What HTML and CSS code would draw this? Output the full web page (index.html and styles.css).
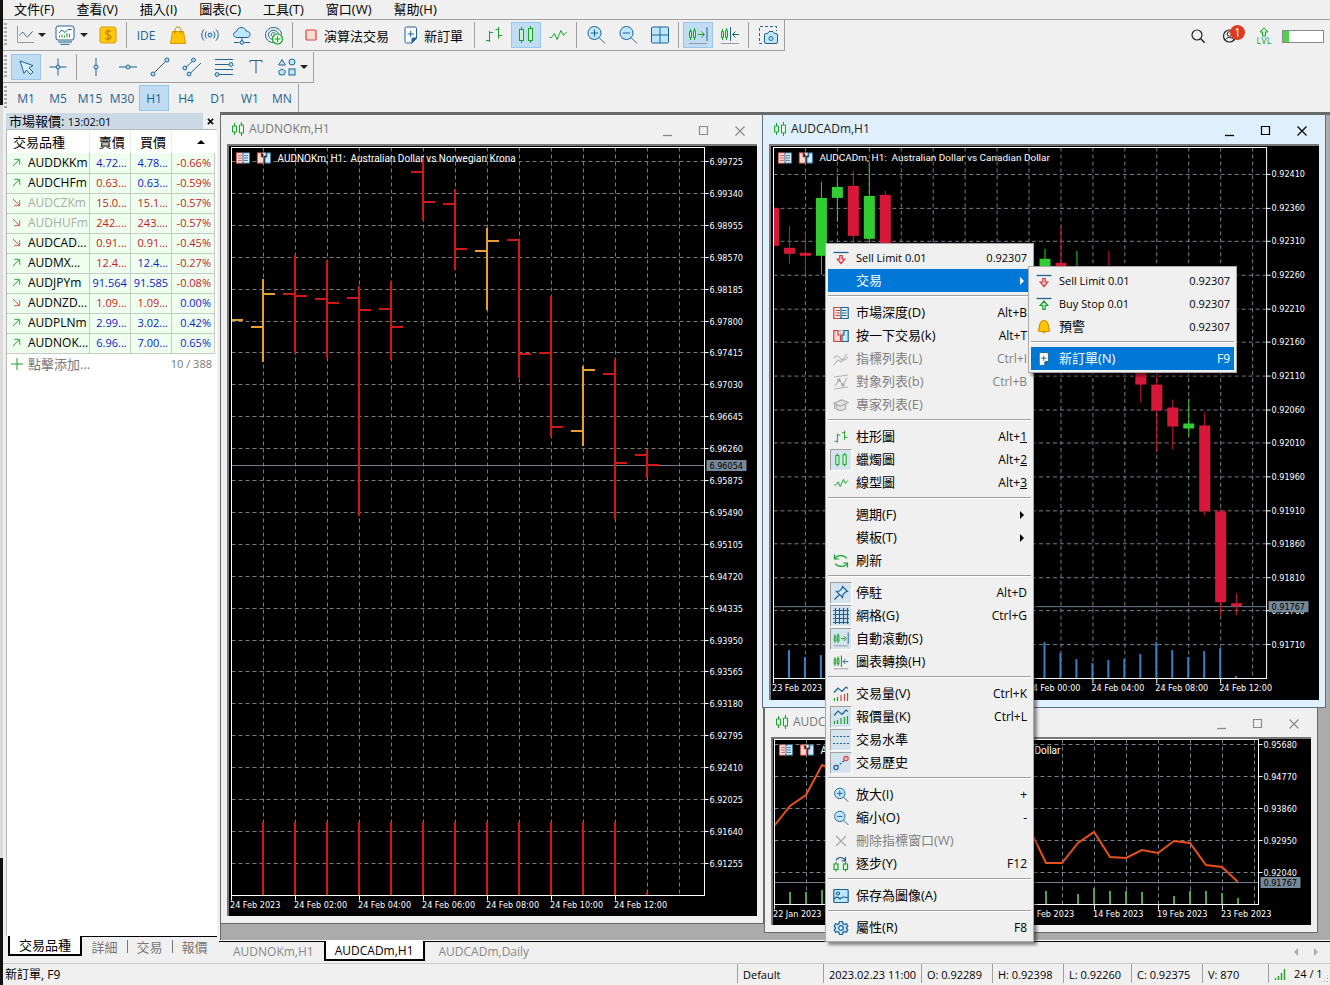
FILE: index.html
```html
<!DOCTYPE html>
<html lang="zh-Hant">
<head>
<meta charset="utf-8">
<title>AUDCADm,H1</title>
<link rel="stylesheet" href="styles.css">
</head>
<body>
<svg class="defs" aria-hidden="true">
  <symbol id="i-linechart" viewBox="0 0 20 20"><path d="M2.500 1v16.500H19" stroke="#999"/><path d="M4.500 10.500c2-3 3.500-4 5-1.500s3 3.500 4 2l4-4.500" class="b"/></symbol>
  <symbol id="i-template" viewBox="0 0 20 20"><rect x="1" y="1" width="18" height="14" rx="2" class="b" fill="#fff"/><path d="M3 17h14M5.500 19.300h9" class="b"/><path d="M4 8l3-3 3 2.500L13 4.500h3.500" class="b"/><path d="M4.500 12.500v-2M7 12.500v-3M9.500 12.500v-2M12 12.500V8M14.500 12.500V9" class="g"/></symbol>
  <symbol id="i-dollar" viewBox="0 0 20 20"><rect x="2" y="2" width="16" height="16" rx="2" fill="#ffca08" stroke="#d99a00"/><path d="M13 6.500c-2-1.500-5.500-1-5.500 1.300 0 2.800 5.500 1.400 5.500 4.400 0 2.300-4 2.500-6 .8M10.200 4v12" stroke="#c88400" stroke-width="1.300"/></symbol>
  <symbol id="i-bag" viewBox="0 0 20 20"><path d="M4.500 6.500h11L17.500 18.500h-15z" fill="#ffc400" stroke="#d69600"/><path d="M7 9V5c0-4 6-4 6 0v4" stroke="#c78900"/></symbol>
  <symbol id="i-signal" viewBox="0 0 20 20"><circle cx="10" cy="10" r="2" class="bf"/><path d="M6.500 6.500c-1.800 2-1.800 5 0 7M13.500 6.500c1.800 2 1.800 5 0 7M4 4.500c-3 3.300-3 7.700 0 11M16 4.500c3 3.300 3 7.700 0 11" class="b"/></symbol>
  <symbol id="i-cloud" viewBox="0 0 20 20"><path d="M5 12.500c-4.500 0-4.500-5.500-.6-5.700C5 1.500 13 1 14 6c5 0 5.500 6.500 1 6.500z" class="bf"/><path d="M10 12.500v3.500M2 17.500h5.500M12.500 17.500H18" class="b"/><circle cx="10" cy="17.500" r="1.800" class="bf"/></symbol>
  <symbol id="i-target" viewBox="0 0 20 20"><path d="M9 17.500C4.500 17.500 1.500 14 1.500 10S5 2.500 9.500 2.500s8 3 8 7M8.500 14.500c-2.500-.5-4-2.500-4-4.800 0-2.500 2.300-4.500 5-4.500 2.500 0 4.500 1.800 5 4M8.500 11.500c-2-1-1.300-3.800 1-3.800 1.300 0 2 .8 2.200 1.800" class="b"/><circle cx="13.500" cy="14" r="5" fill="#e8ffe8" stroke="#17a31a" stroke-width="1.200"/><path d="M10.500 14h6M13.500 11v6" class="g"/></symbol>
  <symbol id="i-stop" viewBox="0 0 20 20"><rect x="5" y="5" width="10" height="10" rx="1" fill="#ffd9d0" stroke="#d0443c" stroke-width="1.200"/></symbol>
  <symbol id="i-order" viewBox="0 0 20 20"><path d="M4 3.500Q4 2 5.500 2H14q1.500 0 1.500 1.500V13L11 18H5.500Q4 18 4 16.500z" class="b" fill="#fff"/><path d="M15.500 13H12q-1 0-1 1v4z" fill="#1d6391" stroke="#1d6391"/><path d="M6.500 9h6.500M9.700 5.800v6.400" class="b"/></symbol>
  <symbol id="i-bars" viewBox="0 0 20 20"><path d="M5.500 6v11M2 15.500h3.500M5.500 7.500H9M14.500 2v11.500M11.500 4.500h3M14.500 10.500H18" class="g"/></symbol>
  <symbol id="i-candles" viewBox="0 0 20 20"><path d="M5.500 2v16M14.500 1v17" class="g"/><rect x="3.500" y="4.500" width="4" height="11" fill="#c8f5c8" class="g"/><rect x="12.500" y="3.500" width="4" height="12" fill="#c8f5c8" class="g"/></symbol>
  <symbol id="i-zigzag" viewBox="0 0 20 20"><path d="M1.500 12.500h2l3-4 2.500 6 4-9 2.500 5 3-3.500" class="g"/></symbol>
  <symbol id="i-zin" viewBox="0 0 20 20"><circle cx="8.500" cy="8" r="6.500" class="bf"/><path d="M13 12.500l6 6M5 8h7M8.500 4.500v7" class="b"/></symbol>
  <symbol id="i-zout" viewBox="0 0 20 20"><circle cx="8.500" cy="8" r="6.500" class="bf"/><path d="M13 12.500l6 6M5 8h7" class="b"/></symbol>
  <symbol id="i-tiles" viewBox="0 0 20 20"><rect x="1.500" y="2" width="17" height="16" rx="1" class="bf"/><path d="M10 2v16M1.500 10h17" class="b"/></symbol>
  <symbol id="i-scroll" viewBox="0 0 20 20"><path d="M2.500 4v11M6.500 3v12" class="g"/><path d="M1.500 6.500h2v6h-2zM5.500 5.500h2v7h-2z" fill="#c8f5c8" class="g"/><path d="M10 9.500h6M13.500 6.500l3 3-3 3" class="g"/><path d="M19 2v14" class="b"/><path d="M1 18.500h18" stroke="#999"/></symbol>
  <symbol id="i-shift" viewBox="0 0 20 20"><path d="M2.500 4v11M6.500 3v12" class="g"/><path d="M1.500 6.500h2v6h-2zM5.500 5.500h2v7h-2z" fill="#c8f5c8" class="g"/><path d="M10.500 2v14M13 9.500h6M15.500 6.500l-3 3 3 3" class="b"/><path d="M1 18.500h18" stroke="#999"/></symbol>
  <symbol id="i-camera" viewBox="0 0 20 20"><path d="M4 18.500H1.500v-17h17V6" class="b" stroke-dasharray="3 2"/><path d="M6.500 10q0-1.500 1.500-1.500h1.500L11 6.500h4l1.500 2H18q1.500 0 1.500 1.500v7q0 1.500-1.500 1.500H8q-1.500 0-1.500-1.500z" class="bf"/><circle cx="13" cy="13.500" r="2" class="b"/></symbol>
  <symbol id="i-search" viewBox="0 0 20 20"><circle cx="9" cy="9" r="5" stroke="#222" stroke-width="1.200"/><path d="M12.700 12.700l4 4" stroke="#222" stroke-width="1.400"/></symbol>
  <symbol id="i-user" viewBox="0 0 20 20"><circle cx="9.500" cy="10" r="6" stroke="#222" stroke-width="1.200"/><circle cx="9.500" cy="8" r="2.300" stroke="#222"/><path d="M5 14.500c1-4 8-4 9 0" stroke="#222"/></symbol>
  <symbol id="i-up" viewBox="0 0 12 10"><path d="M6 .8L10 5H7.500v4h-3V5H2z" fill="#c8f5c8" class="g"/></symbol>
  <symbol id="i-cursor" viewBox="0 0 20 20"><path d="M4 4l13 4.500-4 2.500 4 4-2.500 2.500-4-4.500L8 16.500z" fill="#d5eeff" class="b"/></symbol>
  <symbol id="i-cross" viewBox="0 0 20 20"><path d="M1.500 10h17M10 1.500v17" class="b"/><circle cx="10" cy="10" r="1.800" class="bf"/></symbol>
  <symbol id="i-vline" viewBox="0 0 20 20"><path d="M10 1v18" class="b"/><circle cx="10" cy="10" r="2" class="bf"/></symbol>
  <symbol id="i-hline" viewBox="0 0 20 20"><path d="M1 10h18" class="b"/><circle cx="10" cy="10" r="2" class="bf"/></symbol>
  <symbol id="i-trend" viewBox="0 0 20 20"><path d="M3 17L17 3" class="b"/><circle cx="3" cy="17" r="2" class="bf"/><circle cx="17" cy="3" r="2" class="bf"/></symbol>
  <symbol id="i-channel" viewBox="0 0 20 20"><path d="M3 11l9-8M7 17.500L19 6" class="b"/><circle cx="2.800" cy="11" r="1.900" class="bf"/><circle cx="11.500" cy="3" r="1.900" class="bf"/><circle cx="7" cy="17" r="1.900" class="bf"/></symbol>
  <symbol id="i-fibo" viewBox="0 0 20 20"><path d="M1 2.500h18M1 7.500h18M1 12.500h18M1 17.500h18" class="b"/><circle cx="17" cy="7.500" r="1.900" class="bf"/><circle cx="3" cy="17.500" r="1.900" class="bf"/></symbol>
  <symbol id="i-text" viewBox="0 0 20 20"><path d="M4 5.500v-2h12v2M10 3.500v13" class="b"/></symbol>
  <symbol id="i-shapes" viewBox="0 0 20 20"><path d="M5 2.500l3.300 5.500H1.700z" class="bf"/><circle cx="15" cy="5" r="3" class="bf"/><path d="M5 12l3.500 2.300-1.300 3.500H2.800l-1.300-3.500z" class="bf"/><rect x="12" y="12" width="6" height="6" class="bf"/></symbol>
  <symbol id="i-sell" viewBox="0 0 16 16"><path d="M.5 2.500h15" class="b" stroke-width="1.300"/><path d="M6.800 5.500h2.400V9h2.600L8 13.500 4.200 9h2.600z" fill="#ffdcdc" stroke="#d8383c"/></symbol>
  <symbol id="i-buy" viewBox="0 0 16 16"><path d="M.5 2.500h15" class="b" stroke-width="1.300"/><path d="M6.800 13.500h2.400V9.500h2.600L8 5 4.200 9.500h2.600z" fill="#d0f8d0" class="g"/></symbol>
  <symbol id="i-bell" viewBox="0 0 16 16"><path d="M8 1.500c4 0 4.500 4 4.700 7.500l1 2.300q0 1.200-1.200 1.200h-9q-1.200 0-1.200-1.200l1-2.300C3.500 5.500 4 1.500 8 1.500z" fill="#ffc400" stroke="#cf9000"/><path d="M6 13.300h4l-2 1.500z" fill="#cf9000"/></symbol>
  <symbol id="i-dom" viewBox="0 0 16 16"><path d="M8 2.500H.8v11H8" fill="#fff0ee" stroke="#d0443c"/><path d="M8 2.500h7.200v11H8z" fill="#eaf6ff" class="b"/><path d="M2.500 5.500H7M2.500 8H7M2.500 10.500H7" stroke="#d0443c"/><path d="M9 5.500h4.500M9 8h4.500M9 10.500h4.500" class="b"/></symbol>
  <symbol id="i-click" viewBox="0 0 16 16"><path d="M.8 2.500H5V7h2.500v6.500H.8z" fill="#ffd9d0" stroke="#d0443c"/><path d="M15.200 2.500H11V7H9v6.500h6.200z" fill="#cdeaff" class="b"/><path d="M6 2.500h4v2.500L8.500 6z" fill="#f4f4f4" stroke="#999" stroke-width=".8"/></symbol>
  <symbol id="i-indic" viewBox="0 0 16 16"><path d="M1 14l4-5 3 2 6-8M1 7c3-3 4-3 6 0s5 3 8-1" stroke="#b4b4b4"/></symbol>
  <symbol id="i-objects" viewBox="0 0 16 16"><path d="M1 3l14-2M1 15l14-2M2 12l4-6 4 5 4-7" stroke="#b4b4b4"/><circle cx="6" cy="6" r="1.200" stroke="#aaa"/><circle cx="10" cy="11" r="1.200" stroke="#aaa"/></symbol>
  <symbol id="i-hat" viewBox="0 0 16 16"><path d="M.8 6l8-3 6.500 2.500-8 3.500zM3.500 7.500v4.500c2.500 2 6 1.500 9 0V7M1.500 6.500V12" fill="#e4e4e4" stroke="#aaa"/></symbol>
  <symbol id="i-refresh" viewBox="0 0 16 16"><path d="M1.500 1.500V6H6M1.800 6c1.500-4 9-5 12-.5M14.500 14.500V10H10M14.200 10c-1.500 4-9 5-12 .5" class="g"/></symbol>
  <symbol id="i-pin" viewBox="0 0 16 16"><path d="M9.500 1.500l5 5-2 .5-2.500 2.500-.5 3-6-6 3-.5L9 3.500zM6 10l-4.500 4.500" fill="#cdeaff" class="b"/></symbol>
  <symbol id="i-grid" viewBox="0 0 16 16"><path d="M2.500 0v16M6.500 0v16M10.500 0v16M14.500 0v16M0 2.500h16M0 6.500h16M0 10.500h16M0 14.500h16" class="b"/></symbol>
  <symbol id="i-volume" viewBox="0 0 16 16"><path d="M1 6.500l4-4.500 4 3.500L13 1l2 1.500" class="b"/><path d="M1.500 15v-3M4.500 15v-4M14.500 15V7" class="g"/><path d="M8 15V9M11.500 15V8" stroke="#d0443c"/></symbol>
  <symbol id="i-ticks" viewBox="0 0 16 16"><path d="M1 6.500l4-4.500 4 3.500L13 1l2 1.500" class="b"/><path d="M1.500 15v-3M4.500 15v-4M8 15V9M11.500 15V8M14.500 15V7" class="g"/></symbol>
  <symbol id="i-levels" viewBox="0 0 16 16"><path d="M0 4.500h16M0 11.500h16" class="b" stroke-dasharray="2 1.500"/></symbol>
  <symbol id="i-history" viewBox="0 0 16 16"><path d="M4 11.500L12 5" class="b" stroke-dasharray="2 1.500"/><circle cx="3" cy="12.500" r="2.200" class="bf"/><circle cx="13" cy="3.500" r="2.200" fill="#ffd0d0" stroke="#d0443c"/></symbol>
  <symbol id="i-x" viewBox="0 0 16 16"><path d="M3 3l10 10M13 3L3 13" stroke="#aaa"/></symbol>
  <symbol id="i-step" viewBox="0 0 16 16"><path d="M3 4.500c2-4 7-4 9 0M12.500 1v4h-4" class="b"/><path d="M3 6v9.500M12.500 6v9.500" class="g"/><path d="M1 8h4v5.500H1zM10.500 8h4v5.500h-4z" fill="#e0f8e0" class="g"/></symbol>
  <symbol id="i-image" viewBox="0 0 16 16"><rect x=".8" y="1.500" width="14.400" height="13" rx="1" class="bf"/><path d="M1 11c3-3 4-2 6 0 3-3 5-2 8-1" class="b"/><circle cx="5" cy="5.500" r="1.500" class="b"/></symbol>
  <symbol id="i-gear" viewBox="0 0 16 16"><path d="M6.500 1.500h3l.5 2 1.500.8 2-.6 1.300 2.500L13.300 8l1.500 1.800-1.300 2.500-2-.6-1.500.8-.5 2h-3l-.5-2-1.500-.8-2 .6-1.300-2.500L2.700 8 1.200 6.200l1.300-2.500 2 .6L6 3.500z" class="bf"/><circle cx="8" cy="8" r="2.300" fill="#f0f0f0" class="b"/></symbol>
  <symbol id="i-conn" viewBox="0 0 12 12"><path d="M1.500 12v-2M4.500 12V8M7.500 12V5M10.500 12V1" stroke="#2aa02a" stroke-width="1.500"/></symbol>
  <symbol id="i-wincandles" viewBox="0 0 14 16"><path d="M3.500 2v12M10.500 1v14" class="g"/><path d="M1.500 5h4v6h-4zM8.500 4h4v8h-4z" fill="#e4f8e4" class="g"/></symbol>
  <symbol id="i-upright" viewBox="0 0 10 10"><path d="M1 9l7-7M2.500 1.500h6v6" class="g"/></symbol>
  <symbol id="i-downright" viewBox="0 0 10 10"><path d="M1 1l7 7M2.500 8.500h6v-6" stroke="#d0443c"/></symbol>
  <symbol id="i-plus" viewBox="0 0 12 12"><path d="M6 0v12M0 6h12" class="g"/></symbol>
  <symbol id="i-min" viewBox="0 0 12 12"><path d="M1 10.500h9" stroke="currentColor" stroke-width="1.300"/></symbol>
  <symbol id="i-max" viewBox="0 0 12 12"><path d="M1.500 1.500h8v8h-8z" stroke="currentColor" stroke-width="1.200"/></symbol>
  <symbol id="i-close" viewBox="0 0 12 12"><path d="M1.500 1.500l9 9M10.500 1.500l-9 9" stroke="currentColor" stroke-width="1.200"/></symbol>
  <symbol id="i-shut" viewBox="0 0 8 8"><path d="M1 1l6 6M7 1L1 7" stroke="#000" stroke-width="1.700"/></symbol>
</svg>

<div class="app">
  <nav class="menubar">
    <button>文件(F)</button><button>查看(V)</button><button>插入(I)</button><button>圖表(C)</button><button>工具(T)</button><button>窗口(W)</button><button>幫助(H)</button>
  </nav>

  <div class="toolrow">
    <div class="toolbar">
      <span class="grip"></span>
      <button class="tool drop" aria-label="線型"><svg class="i20"><use href="#i-linechart"/></svg><span class="caret"></span></button>
      <button class="tool drop drop-b" aria-label="模板"><svg class="i20"><use href="#i-template"/></svg><span class="caret"></span></button>
      <button class="tool" aria-label="報價"><svg class="i20"><use href="#i-dollar"/></svg></button>
      <span class="sep"></span>
      <button class="tool">IDE</button>
      <button class="tool" aria-label="市場"><svg class="i20"><use href="#i-bag"/></svg></button>
      <button class="tool" aria-label="信號"><svg class="i20"><use href="#i-signal"/></svg></button>
      <button class="tool" aria-label="VPS"><svg class="i20"><use href="#i-cloud"/></svg></button>
      <button class="tool" aria-label="訂閱"><svg class="i20"><use href="#i-target"/></svg></button>
      <span class="sep"></span>
      <button class="tool word"><svg class="i20"><use href="#i-stop"/></svg>演算法交易</button>
      <button class="tool word order"><svg class="i20"><use href="#i-order"/></svg>新訂單</button>
      <span class="sep"></span>
      <button class="tool" aria-label="柱形圖"><svg class="i20"><use href="#i-bars"/></svg></button>
      <button class="tool on" aria-label="蠟燭圖"><svg class="i20"><use href="#i-candles"/></svg></button>
      <button class="tool" aria-label="線型圖"><svg class="i20"><use href="#i-zigzag"/></svg></button>
      <span class="sep"></span>
      <button class="tool" aria-label="放大"><svg class="i20"><use href="#i-zin"/></svg></button>
      <button class="tool" aria-label="縮小"><svg class="i20"><use href="#i-zout"/></svg></button>
      <button class="tool" aria-label="平鋪"><svg class="i20"><use href="#i-tiles"/></svg></button>
      <span class="sep"></span>
      <button class="tool on" aria-label="自動滾動"><svg class="i20"><use href="#i-scroll"/></svg></button>
      <button class="tool" aria-label="圖表轉換"><svg class="i20"><use href="#i-shift"/></svg></button>
      <span class="sep"></span>
      <button class="tool" aria-label="截圖"><svg class="i20"><use href="#i-camera"/></svg></button>
    </div>
    <div class="account">
      <button class="tool" aria-label="搜尋"><svg class="i20"><use href="#i-search"/></svg></button>
      <button class="tool user" aria-label="帳戶"><svg class="i20"><use href="#i-user"/></svg><span class="badge">1</span></button>
      <span class="lvl"><svg class="arrow"><use href="#i-up"/></svg>LVL</span>
      <span class="progress"><span class="bar"></span></span>
    </div>
  </div>
  <div class="toolrow">
    <div class="toolbar">
      <span class="grip"></span>
      <button class="tool on" aria-label="游標"><svg class="i20"><use href="#i-cursor"/></svg></button>
      <button class="tool" aria-label="十字"><svg class="i20"><use href="#i-cross"/></svg></button>
      <span class="sep"></span>
      <button class="tool" aria-label="垂直線"><svg class="i20"><use href="#i-vline"/></svg></button>
      <button class="tool" aria-label="水平線"><svg class="i20"><use href="#i-hline"/></svg></button>
      <button class="tool" aria-label="趨勢線"><svg class="i20"><use href="#i-trend"/></svg></button>
      <button class="tool" aria-label="通道"><svg class="i20"><use href="#i-channel"/></svg></button>
      <button class="tool" aria-label="斐波納契"><svg class="i20"><use href="#i-fibo"/></svg></button>
      <button class="tool" aria-label="文字"><svg class="i20"><use href="#i-text"/></svg></button>
      <button class="tool drop" aria-label="圖形"><svg class="i20"><use href="#i-shapes"/></svg><span class="caret"></span></button>
    </div>
  </div>
  <div class="toolrow last">
    <div class="toolbar">
      <span class="grip"></span>
      <button class="tool">M1</button><button class="tool">M5</button><button class="tool">M15</button><button class="tool">M30</button><button class="tool on">H1</button><button class="tool">H4</button><button class="tool">D1</button><button class="tool">W1</button><button class="tool">MN</button>
    </div>
  </div>

  <div class="main">
    <aside class="watch">
      <div class="caption"><span class="title">市場報價: <span class="num">13:02:01</span></span><button class="shut" aria-label="關閉"><svg class="i7"><use href="#i-shut"/></svg></button></div>
      <div class="list">
        <table class="quotes">
          <thead><tr><th class="sym">交易品種</th><th>賣價</th><th>買價</th><th class="chg"><span class="sort"></span></th></tr></thead>
          <tbody>
            <tr><td class="sym"><svg class="i9"><use href="#i-upright"/></svg>AUDDKKm</td><td class="up">4.72...</td><td class="up">4.78...</td><td class="dn">-0.66%</td></tr>
            <tr><td class="sym"><svg class="i9"><use href="#i-upright"/></svg>AUDCHFm</td><td class="dn">0.63...</td><td class="up">0.63...</td><td class="dn">-0.59%</td></tr>
            <tr><td class="sym off"><svg class="i9"><use href="#i-downright"/></svg>AUDCZKm</td><td class="dn">15.0...</td><td class="dn">15.1...</td><td class="dn">-0.57%</td></tr>
            <tr><td class="sym off"><svg class="i9"><use href="#i-downright"/></svg>AUDHUFm</td><td class="dn">242....</td><td class="dn">243....</td><td class="dn">-0.57%</td></tr>
            <tr><td class="sym"><svg class="i9"><use href="#i-downright"/></svg>AUDCAD...</td><td class="dn">0.91...</td><td class="dn">0.91...</td><td class="dn">-0.45%</td></tr>
            <tr><td class="sym"><svg class="i9"><use href="#i-upright"/></svg>AUDMX...</td><td class="dn">12.4...</td><td class="up">12.4...</td><td class="dn">-0.27%</td></tr>
            <tr><td class="sym"><svg class="i9"><use href="#i-upright"/></svg>AUDJPYm</td><td class="up">91.564</td><td class="up">91.585</td><td class="dn">-0.08%</td></tr>
            <tr><td class="sym"><svg class="i9"><use href="#i-downright"/></svg>AUDNZD...</td><td class="dn">1.09...</td><td class="dn">1.09...</td><td class="up">0.00%</td></tr>
            <tr><td class="sym"><svg class="i9"><use href="#i-upright"/></svg>AUDPLNm</td><td class="up">2.99...</td><td class="up">3.02...</td><td class="up">0.42%</td></tr>
            <tr><td class="sym"><svg class="i9"><use href="#i-upright"/></svg>AUDNOK...</td><td class="up">6.96...</td><td class="up">7.00...</td><td class="up">0.65%</td></tr>
          </tbody>
        </table>
        <div class="add"><svg class="i12"><use href="#i-plus"/></svg><span>點擊添加...</span><span class="count">10 / 388</span></div>
      </div>
      <div class="wtabs"><button class="on">交易品種</button><button>詳細</button><button>交易</button><button>報價</button></div>
    </aside>

    <div class="work">
      <div class="desk">
        <section class="win w-nok">
          <header><svg class="wicon"><use href="#i-wincandles"/></svg><h2>AUDNOKm,H1</h2><span class="wbtns"><button aria-label="最小化"><svg class="i12"><use href="#i-min"/></svg></button><button aria-label="最大化"><svg class="i12"><use href="#i-max"/></svg></button><button aria-label="關閉"><svg class="i12"><use href="#i-close"/></svg></button></span></header>
          <svg class="chart" id="nok"></svg>
        </section>
        <section class="win w-daily">
          <header><svg class="wicon"><use href="#i-wincandles"/></svg><h2>AUDCADm,Daily</h2><span class="wbtns"><button aria-label="最小化"><svg class="i12"><use href="#i-min"/></svg></button><button aria-label="最大化"><svg class="i12"><use href="#i-max"/></svg></button><button aria-label="關閉"><svg class="i12"><use href="#i-close"/></svg></button></span></header>
          <svg class="chart" id="daily"></svg>
        </section>
        <section class="win w-cad active">
          <header><svg class="wicon"><use href="#i-wincandles"/></svg><h2>AUDCADm,H1</h2><span class="wbtns"><button aria-label="最小化"><svg class="i12"><use href="#i-min"/></svg></button><button aria-label="最大化"><svg class="i12"><use href="#i-max"/></svg></button><button aria-label="關閉"><svg class="i12"><use href="#i-close"/></svg></button></span></header>
          <svg class="chart" id="cad"></svg>
        </section>
      </div>
      <div class="ctabs"><button>AUDNOKm,H1</button><button class="on">AUDCADm,H1</button><button>AUDCADm,Daily</button><span class="pager"><i class="prev"></i><i class="next"></i></span></div>
    </div>
  </div>

  <footer class="status">
    <span class="hint">新訂單, F9</span><span class="c1">Default</span><span class="c2">2023.02.23 11:00</span><span class="c3">O: 0.92289</span><span class="c3">H: 0.92398</span><span class="c4">L: 0.92260</span><span class="c3">C: 0.92375</span><span class="c5">V: 870</span><span class="c6"><svg class="i12"><use href="#i-conn"/></svg>24 / 1<i class="sizer"></i></span>
  </footer>

  <div class="menu ctx" role="menu">
    <button><span class="ic"><svg class="i16"><use href="#i-sell"/></svg></span><span class="lat">Sell Limit 0.01</span><kbd class="lat">0.92307</kbd></button>
    <button class="hot"><span class="ic"></span>交易<i class="more"></i></button>
    <hr>
    <button><span class="ic"><svg class="i16"><use href="#i-dom"/></svg></span>市場深度(D)<kbd>Alt+B</kbd></button>
    <button><span class="ic"><svg class="i16"><use href="#i-click"/></svg></span>按一下交易(k)<kbd>Alt+T</kbd></button>
    <button class="dis"><span class="ic"><svg class="i16"><use href="#i-indic"/></svg></span>指標列表(L)<kbd>Ctrl+I</kbd></button>
    <button class="dis"><span class="ic"><svg class="i16"><use href="#i-objects"/></svg></span>對象列表(b)<kbd>Ctrl+B</kbd></button>
    <button class="dis"><span class="ic"><svg class="i16"><use href="#i-hat"/></svg></span>專家列表(E)</button>
    <hr>
    <button><span class="ic"><svg class="i16"><use href="#i-bars"/></svg></span>柱形圖<kbd>Alt+<u>1</u></kbd></button>
    <button><span class="ic on"><svg class="i16"><use href="#i-candles"/></svg></span>蠟燭圖<kbd>Alt+<u>2</u></kbd></button>
    <button><span class="ic"><svg class="i16"><use href="#i-zigzag"/></svg></span>線型圖<kbd>Alt+<u>3</u></kbd></button>
    <hr>
    <button><span class="ic"></span>週期(F)<i class="more"></i></button>
    <button><span class="ic"></span>模板(T)<i class="more"></i></button>
    <button><span class="ic"><svg class="i16"><use href="#i-refresh"/></svg></span>刷新</button>
    <hr>
    <button><span class="ic on"><svg class="i16"><use href="#i-pin"/></svg></span>停駐<kbd>Alt+D</kbd></button>
    <button><span class="ic on"><svg class="i16"><use href="#i-grid"/></svg></span>網格(G)<kbd>Ctrl+G</kbd></button>
    <button><span class="ic on"><svg class="i16"><use href="#i-scroll"/></svg></span>自動滾動(S)</button>
    <button><span class="ic"><svg class="i16"><use href="#i-shift"/></svg></span>圖表轉換(H)</button>
    <hr>
    <button><span class="ic"><svg class="i16"><use href="#i-volume"/></svg></span>交易量(V)<kbd>Ctrl+K</kbd></button>
    <button><span class="ic on"><svg class="i16"><use href="#i-ticks"/></svg></span>報價量(K)<kbd>Ctrl+L</kbd></button>
    <button><span class="ic on"><svg class="i16"><use href="#i-levels"/></svg></span>交易水準</button>
    <button><span class="ic on"><svg class="i16"><use href="#i-history"/></svg></span>交易歷史</button>
    <hr>
    <button><span class="ic"><svg class="i16"><use href="#i-zin"/></svg></span>放大(I)<kbd>+</kbd></button>
    <button><span class="ic"><svg class="i16"><use href="#i-zout"/></svg></span>縮小(O)<kbd>-</kbd></button>
    <button class="dis"><span class="ic"><svg class="i16"><use href="#i-x"/></svg></span>刪除指標窗口(W)</button>
    <button><span class="ic"><svg class="i16"><use href="#i-step"/></svg></span>逐步(Y)<kbd>F12</kbd></button>
    <hr>
    <button><span class="ic"><svg class="i16"><use href="#i-image"/></svg></span>保存為圖像(A)</button>
    <hr>
    <button><span class="ic"><svg class="i16"><use href="#i-gear"/></svg></span>屬性(R)<kbd>F8</kbd></button>
  </div>
  <div class="menu sub" role="menu">
    <button><span class="ic"><svg class="i16"><use href="#i-sell"/></svg></span><span class="lat">Sell Limit 0.01</span><kbd class="lat">0.92307</kbd></button>
    <button><span class="ic"><svg class="i16"><use href="#i-buy"/></svg></span><span class="lat">Buy Stop 0.01</span><kbd class="lat">0.92307</kbd></button>
    <button><span class="ic"><svg class="i16"><use href="#i-bell"/></svg></span>預警<kbd class="lat">0.92307</kbd></button>
    <hr>
    <button class="hot"><span class="ic"><svg class="i16"><use href="#i-order"/></svg></span>新訂單(N)<kbd>F9</kbd></button>
  </div>
</div>
<script src="charts.js"></script>
</body>
</html>
```

FILE: styles.css
```css
* { box-sizing: border-box; }
body {
  margin: 0;
  height: 100vh;
  overflow: hidden;
  background: linear-gradient(#111 105px, #dcdcdc 105px 858px, #111 858px);
  font: 12px "Open Sans", "Noto Sans CJK TC", sans-serif;
  color: #000;
}
button { border: 0; padding: 0; margin: 0; background: none; font: inherit; color: inherit; white-space: nowrap; }
.defs { position: absolute; width: 0; height: 0; }
svg { fill: none; flex: none; }
.b { stroke: #1d6391; }
.bf { stroke: #1d6391; fill: #bfe6ff; }
.g { stroke: #17a32a; }
.i20 { width: 20px; height: 20px; }
.i16 { width: 16px; height: 16px; stroke-width: 1.2; }
.i12 { width: 12px; height: 12px; }
.i9 { width: 9px; height: 9px; }
.i7 { width: 7px; height: 7px; }

.app {
  position: relative;
  display: flex;
  flex-direction: column;
  height: 100%;
  margin-left: 3px;
  background: #f0f0f0;
}

/* menu bar and toolbars */
.menubar { display: flex; gap: 22px; height: 20px; padding-left: 11px; border-bottom: 1px solid #a0a0a0; font-size: 13px; line-height: 16px; }
.menubar button { height: 17px; }
.toolrow { display: flex; justify-content: space-between; height: 32px; }
.toolrow.last { height: 28px; }
.toolbar { display: flex; align-items: center; border-right: 1px solid #a0a0a0; border-bottom: 1px solid #a0a0a0; height: 31px; }
.last .toolbar { height: 28px; border-bottom: 0; }
.grip { width: 3px; height: 24px; margin: 0 3px 0 1px; background: repeating-linear-gradient(#a8a8a8 0 2px, transparent 2px 4px); }
.tool { display: flex; align-items: center; justify-content: center; width: 30px; height: 26px; margin: 0 1px; color: #1d6391; }
.tool.on { background: #bfdcf2; border: 1px solid #99c5ea; }
.tool.drop { width: 41px; margin: 0; gap: 3px; }
.tool.drop-b { gap: 5px; }
.caret { border: 4px solid transparent; border-top-color: #222; border-bottom: 0; }
.tool.word { width: 98px; color: #000; font-size: 13px; justify-content: flex-start; padding-left: 4px; gap: 3px; }
.tool.order { width: 74px; }
.sep { width: 1px; height: 26px; margin: 0 3px 0 2px; background: #a0a0a0; }
.account { display: flex; align-items: center; padding-right: 6px; }
.user { position: relative; }
.badge { position: absolute; left: 15px; top: 2px; width: 15px; height: 15px; border-radius: 8px; background: #dd3a20; color: #fff; line-height: 15px; text-align: center; }
.lvl { display: flex; flex-direction: column; align-items: center; width: 36px; font-size: 9px; line-height: 8px; color: #17a32a; }
.arrow { width: 12px; height: 10px; }
.progress { width: 42px; height: 13px; border: 1px solid #888; background: #fff; display: flex; }
.bar { width: 6px; background: #4cd34c; }

/* market watch */
.main { flex: 1; display: flex; min-height: 0; }
.watch { width: 214px; display: flex; flex-direction: column; padding: 1px 0 7px 3px; }
.caption { display: flex; align-items: center; height: 16px; font-size: 13px; }
.caption .title { flex: 1; line-height: 16px; background: #cbd9e7; padding-left: 3px; white-space: nowrap; }
.num { font-size: 11px; }
.shut { width: 14px; height: 16px; display: flex; align-items: center; justify-content: center; }
.list { flex: 1; background: #fff; border: 1px solid #b8b8b8; border-width: 1px 0 0 1px; min-height: 0; }
.quotes { width: 208px; border-collapse: collapse; table-layout: fixed; font-size: 11px; }
.quotes th { height: 23px; padding: 0 5px 0 0; font-size: 13px; font-weight: 400; text-align: right; line-height: 16px; white-space: nowrap; }
.quotes th.sym { width: 82px; text-align: left; padding-left: 6px; }
.quotes th.chg { width: 43px; padding-right: 10px; }
.quotes td { height: 20px; padding: 0 3px 0 0; line-height: 18px; text-align: right; background: #efffef; border: 1px solid #c4ccc4; border-left: 0; white-space: nowrap; }
.quotes th + th { border-left: 1px solid #ececec; }
.quotes tr:first-child td { border-top: 0; }
.quotes td.sym { text-align: left; font-size: 12px; padding-left: 5px; }
.sym svg { margin-right: 7px; }
.off { color: #a8aca8; }
.up { color: #1020c8; }
.dn { color: #c82018; }
.sort { display: inline-block; border: 4px solid transparent; border-bottom-color: #000; border-top: 0; margin-bottom: 3px; }
.add { display: flex; align-items: center; gap: 5px; height: 20px; padding: 0 5px 0 4px; font-size: 13px; line-height: 18px; color: #777; white-space: nowrap; }
.add .count { margin-left: auto; font-size: 11px; }
.wtabs { display: flex; height: 20px; margin-left: 2px; font-size: 13px; color: #777; line-height: 16px; }
.wtabs button { border-top: 1px solid #000; position: relative; flex: 1 0 auto; }
.wtabs .on { background: #fff; color: #000; border: 2px solid #000; border-top: 0; padding: 0 9px; flex: none; }
.wtabs button + button + button::before { content: ""; position: absolute; left: 0; top: 3px; height: 13px; border-left: 1px solid #777; }

/* chart windows */
.work { flex: 1; display: flex; flex-direction: column; min-width: 0; margin-left: 3px; }
.desk { position: relative; flex: 1; overflow: hidden; background: #ababab; border: 1px solid #696969; border-width: 3px 0 0 1px; }
.win { position: absolute; display: flex; flex-direction: column; background: #f0f0f0; border: 1px solid #6a6a6a; border-top: 0; padding: 0 6px 7px; color: #8a8a8a; }
.win.active { background: #dfeffb; border-color: #5d6f80; color: #000; }
.w-nok { left: 0; top: 0; width: 543px; height: 809px; border-left: 0; }
.w-cad { left: 541px; top: 0; width: 564px; height: 593px; }
.w-daily { left: 543px; top: 593px; width: 554px; height: 225px; }
.win header { display: flex; align-items: center; height: 29px; padding: 0 0 2px 4px; }
.wicon { width: 14px; height: 16px; }
.win h2 { margin: 0 0 0 4px; font-size: 12px; font-weight: 400; color: #777; white-space: nowrap; }
.active h2 { color: #222; }
.wbtns { margin-left: auto; display: flex; gap: 24px; padding: 4px 11px 0 0; }
.wbtns button { width: 12px; height: 12px; line-height: 0; }
.chart { flex: 1; width: 100%; min-height: 0; background: #000; border: 1px solid #777; border-width: 2px 0 0 2px; font: 9px "DejaVu Sans Condensed", "DejaVu Sans", sans-serif; }
.chart text { fill: #fff; white-space: pre; }
.chart .tagtext { fill: #000; }
.chart .caption-text { font: 10px Roboto, sans-serif; }

.ctabs { display: flex; height: 23px; margin-left: -1px; border-top: 1px solid #fff; color: #888; line-height: 20px; }
.ctabs button { border-top: 1px solid #000; padding: 0 10px 0 14px; height: 20px; }
.ctabs button.on { background: #fff; color: #000; border: 2px solid #000; border-top: 0; padding: 0 9px; }
.pager { flex: 1; border-top: 1px solid #000; display: flex; justify-content: flex-end; align-items: center; gap: 16px; padding-right: 12px; height: 20px; }
.prev, .next { border: 4px solid transparent; }
.prev { border-right-color: #aaa; border-left: 0; }
.next { border-left-color: #aaa; border-right: 0; }

.status { display: flex; height: 22px; border-top: 1px solid #c8c8c8; font-size: 11px; line-height: 21px; white-space: nowrap; }
.status span { border-left: 1px solid #a0a0a0; padding-left: 5px; margin-bottom: 2px; }
.status .hint { flex: 1; border: 0; padding-left: 2px; font-size: 12px; }
.c1 { width: 86px; }
.c2 { width: 98px; }
.c3 { width: 71px; }
.c4 { width: 68px; }
.c5 { width: 66px; }
.status .c6 { width: 62px; display: flex; align-items: center; gap: 8px; position: relative; }
.sizer { position: absolute; right: 1px; bottom: 0; width: 9px; height: 9px; background: radial-gradient(#999 1px, transparent 1px) 0 0 / 3px 3px; clip-path: polygon(100% 0, 100% 100%, 0 100%); }

/* popup menus */
.menu { position: absolute; padding: 2px; background: #f0f0f0; border: 1px solid #a8a8a8; box-shadow: 3px 3px 3px rgba(0, 0, 0, .45); font-size: 13px; line-height: 21px; }
.ctx { left: 822px; top: 243px; width: 209px; }
.sub { left: 1025px; top: 266px; width: 209px; }
.menu button { display: flex; align-items: center; width: 100%; height: 23px; padding: 0 4px 0 2px; }
.ic { display: flex; align-items: center; justify-content: center; width: 22px; height: 22px; margin-right: 4px; border: 1px solid transparent; }
.ic.on { background: #d5e3ef; border-color: #a0a0a0 #fff #fff #a0a0a0; }
.menu .lat, .menu kbd.lat { font-size: 11px; }
.menu kbd { margin-left: auto; font-family: inherit; font-size: 12px; }
.menu .hot { background: #0078d7; color: #fff; }
.menu .dis { color: #808080; }
.menu hr { border: 0; border-top: 1px solid #a0a0a0; border-bottom: 1px solid #fff; margin: 3px 0 4px; }
.more { margin: 0 3px 0 auto; border: 4px solid transparent; border-left: 4px solid currentColor; border-right: 0; }
```

FILE: charts.js
```js
const NS = 'http://www.w3.org/2000/svg';

function add(parent, tag, attrs, text) {
  const el = document.createElementNS(NS, tag);
  for (const key in attrs) el.setAttribute(key, attrs[key]);
  if (text !== undefined) el.textContent = text;
  parent.appendChild(el);
  return el;
}

function line(svg, x1, y1, x2, y2, stroke, width = 1, dash) {
  const attrs = { x1, y1, x2, y2, stroke, 'stroke-width': width };
  if (dash) attrs['stroke-dasharray'] = dash;
  add(svg, 'line', attrs);
}

function range(from, to, step) {
  const out = [];
  for (let v = from; v <= to; v += step) out.push(v);
  return out;
}

function frame(c) {
  const svg = document.getElementById(c.id);
  svg.setAttribute('viewBox', c.view);
  svg.setAttribute('preserveAspectRatio', 'xMinYMin meet');
  const { l, t, r, b } = c;
  c.gridX.forEach(x => line(svg, x, t, x, b, c.grid, 1, '4 3'));
  for (let i = 0; i < c.rows; i++) {
    const y = Math.round(c.y0 + i * c.dy) + 0.5;
    line(svg, l, y, r, y, c.grid, 1, '4 3');
    line(svg, r, y, r + 4, y, '#fff');
    add(svg, 'text', { x: r + 5, y: y + 3 }, (c.p0 - i * c.dp).toFixed(5));
  }
  line(svg, l, c.now, r, c.now, '#708090');
  c.draw(svg);
  add(svg, 'rect', { x: l, y: t, width: r - l, height: b - t, stroke: '#fff' });
  add(svg, 'rect', { x: r + 2, y: c.now - 5.5, width: 40, height: 11, fill: '#778899' });
  add(svg, 'text', { x: r + 5, y: c.now + 3, class: 'tagtext' }, c.tag);
  c.times.forEach(([x, label]) => {
    line(svg, x + 1.5, b, x + 1.5, b + 5, '#fff');
    add(svg, 'text', { x, y: b + 12 }, label);
  });
  [['#i-dom', l + 4], ['#i-click', l + 25]].forEach(([href, x]) =>
    add(svg, 'use', { href, x, y: t + 3, width: 15, height: 15 }));
  add(svg, 'text', { x: l + 46, y: t + 14, class: 'caption-text' }, c.title);
}

const RED = '#d01818', ORANGE = '#e8a030';

frame({
  id: 'nok', view: '229 146 528 770', l: 231.5, t: 147.5, r: 704.5, b: 895.5,
  grid: '#7a7a7a', gridX: range(263.5, 680, 32), rows: 23, y0: 161, dy: 31.9, p0: 6.99725, dp: 0.00385,
  now: 465.5, tag: '6.96054', title: 'AUDNOKm, H1:  Australian Dollar vs Norwegian Krona',
  times: [[230, '24 Feb 2023'], [294, '24 Feb 02:00'], [358, '24 Feb 04:00'], [422, '24 Feb 06:00'], [486, '24 Feb 08:00'], [550, '24 Feb 10:00'], [614, '24 Feb 12:00']],
  draw(svg) {
    line(svg, 232, 320, 243, 320, ORANGE, 2);
    [[263, 327, 279, 362, 294, ORANGE], [295, 294, 255, 353, 296, RED], [327, 299, 260, 358, 303, RED],
     [359, 298, 286, 516, 310, RED], [391, 309, 281, 360, 327, RED], [423, 172, 159, 220, 202, RED],
     [455, 204, 189, 270, 249, RED], [487, 251, 228, 310, 241, ORANGE], [519, 240, 239, 378, 354, RED],
     [551, 353, 296, 437, 427, RED], [583, 431, 366, 446, 370, ORANGE], [615, 374, 359, 519, 463, RED],
     [647, 455, 449, 478, 465, RED]].forEach(([x, o, h, lo, c, color]) => {
      line(svg, x, h, x, lo, color, 2);
      line(svg, x - 12, o, x, o, color, 2);
      line(svg, x, c, x + 12, c, color, 2);
      line(svg, x, x < 640 ? 822 : 892, x, 895, RED, 2);
    });
  }
});

const DOWN = '#d81838', UP = '#32cd32';

frame({
  id: 'cad', view: '770 146 549 553', l: 772.5, t: 147.5, r: 1266.5, b: 679.5,
  grid: '#778088', gridX: range(804.5, 1253, 32), rows: 15, y0: 174, dy: 33.65, p0: 0.9241, dp: 0.0005,
  now: 607.5, tag: '0.91767', title: 'AUDCADm, H1:  Australian Dollar vs Canadian Dollar',
  times: [[771, '23 Feb 2023'], [1027, '24 Feb 00:00'], [1091, '24 Feb 04:00'], [1155, '24 Feb 08:00'], [1219, '24 Feb 12:00']],
  draw(svg) {
    add(svg, 'rect', { x: 773, y: 208, width: 5, height: 38, fill: DOWN });
    [[788, 226, 264, 248, 254, DOWN], [804, 233, 274, 253, 256, DOWN], [820, 182, 275, 198, 256, UP],
     [836, 177, 222, 187, 198, UP], [852, 171, 243, 186, 236, DOWN], [868, 164, 243, 196, 239, UP],
     [884, 191, 260, 195, 250, DOWN], [1044, 249, 275, 259, 267, UP], [1060, 227, 275, 263, 267, DOWN],
     [1076, 251, 275, 268, 272, UP], [1108, 251, 275, 268, 272, DOWN], [1140, 350, 403, 360, 385, DOWN],
     [1156, 370, 452, 385, 411, DOWN], [1172, 400, 450, 408, 427, DOWN], [1188, 399, 437, 424, 429, UP],
     [1204, 413, 516, 426, 512, DOWN], [1220, 510, 616, 512, 603, DOWN], [1236, 594, 616, 604, 607, DOWN]
    ].forEach(([x, h, lo, top, bottom, color]) => {
      line(svg, x + 0.5, h, x + 0.5, lo, color);
      add(svg, 'rect', { x: x - 5, y: top, width: 11, height: bottom - top, fill: color });
    });
    [[788, 651], [804, 658], [820, 656], [1044, 643], [1060, 654], [1076, 660], [1092, 664], [1108, 661],
     [1124, 660], [1140, 655], [1156, 643], [1172, 651], [1188, 658], [1204, 652], [1220, 649], [1236, 677]
    ].forEach(([x, y]) => line(svg, x, y, x, 679, '#3f7fd0', 2));
  }
});

frame({
  id: 'daily', view: '773 739 538 186', l: 774.5, t: 739.5, r: 1258.5, b: 904.5,
  grid: '#778088', gridX: range(806.5, 1255, 32), rows: 5, y0: 744, dy: 32, p0: 0.9568, dp: 0.0091,
  now: 882.5, tag: '0.91767', title: 'AUDCADm, Daily:  Australian Dollar vs Canadian Dollar',
  times: [[773, '22 Jan 2023'], [1029, '9 Feb 2023'], [1093, '14 Feb 2023'], [1157, '19 Feb 2023'], [1221, '23 Feb 2023']],
  draw(svg) {
    add(svg, 'polyline', {
      points: '775,825 790,806 806,795 822,765 838,772 870,790 1030,830 1033,836 1046,863 1062,863 1078,843 1094,832 1110,857 1126,858 1142,850 1158,853 1174,841 1190,843 1206,865 1222,867 1238,882',
      stroke: '#e8501c', 'stroke-width': 2
    });
    [[790, 892], [806, 892], [822, 890], [1046, 891], [1078, 894], [1094, 888], [1110, 891], [1126, 891],
     [1142, 892], [1174, 896], [1190, 891], [1206, 891], [1222, 893], [1238, 898]
    ].forEach(([x, y]) => line(svg, x, y, x, 904, '#4ca64c', 2));
  }
});
```
